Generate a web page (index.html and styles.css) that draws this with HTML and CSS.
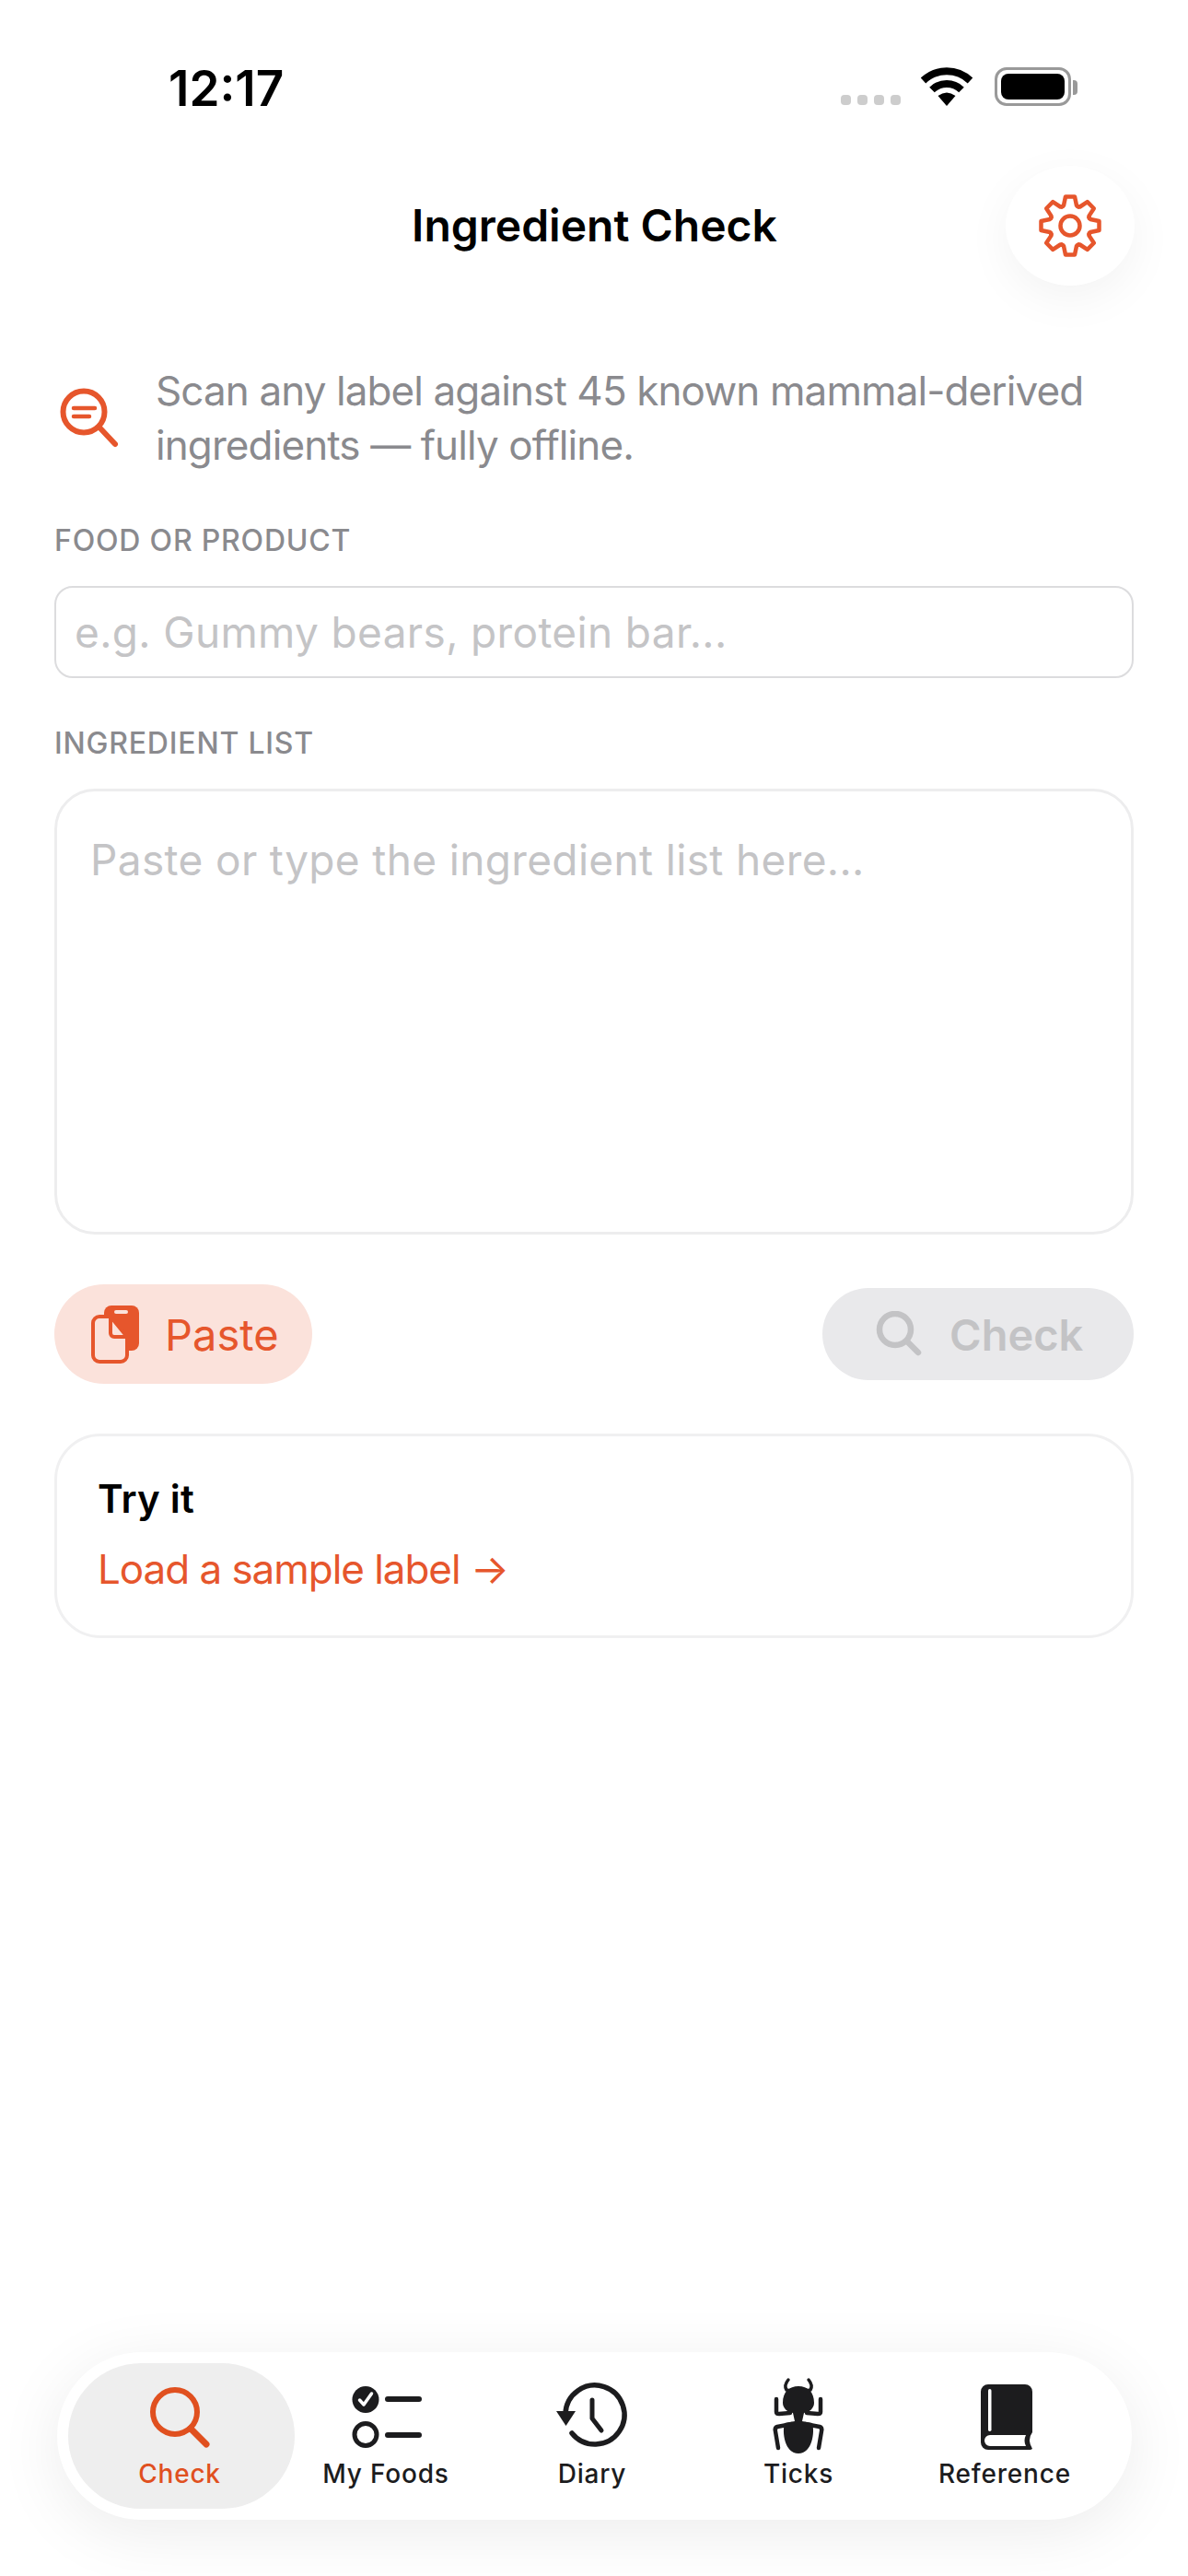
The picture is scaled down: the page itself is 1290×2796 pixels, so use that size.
FILE: index.html
```html
<!DOCTYPE html>
<html lang="en">
<head>
<meta charset="utf-8">
<title>Ingredient Check</title>
<link rel="stylesheet" href="styles.css">
</head>
<body>
<div class="app">
  <div class="status">
    <span class="time">12:17</span>
    <div class="status-icons">
      <div class="dots"><i></i><i></i><i></i><i></i></div>
      <svg class="wifi" width="58" height="42" viewBox="0 0 58 42"><path d="M2.5 14.5A37 37 0 0 1 53.5 14.5M12 24.5A23 23 0 0 1 44 24.5" fill="none" stroke="#000" stroke-width="8"/><path d="M28 42L18.500 31Q28 24 37.500 31Z" fill="#000"/></svg>
      <div class="battery"><div class="battery-fill"></div></div>
    </div>
  </div>

  <header class="header">
    <span></span>
    <h1 class="title">Ingredient Check</h1>
    <button class="gear-btn" aria-label="Settings">
      <svg width="70" height="70" viewBox="-35 -35 70 70" fill="none" stroke="#e6562c" stroke-width="4.500" stroke-linejoin="round" stroke-linecap="round">
        <defs><path id="tooth" d="M-9-20.500L-7-22L-5-31.500H5L7-22L9-20.500"/></defs>
        <use href="#tooth"/><use href="#tooth" transform="rotate(45)"/><use href="#tooth" transform="rotate(90)"/><use href="#tooth" transform="rotate(135)"/>
        <use href="#tooth" transform="rotate(180)"/><use href="#tooth" transform="rotate(225)"/><use href="#tooth" transform="rotate(270)"/><use href="#tooth" transform="rotate(315)"/>
        <circle r="10.500"/>
      </svg>
    </button>
  </header>

  <main class="main">
    <div class="intro">
      <svg class="intro-icon" width="66" height="66" viewBox="0 0 66 66" fill="none" stroke="#e6562c" stroke-linecap="round">
        <circle cx="26" cy="26" r="22.500" stroke-width="6"/>
        <path d="M44 44L60 61" stroke-width="6"/>
        <path d="M15 22H38M15 31H32" stroke-width="4.500"/>
      </svg>
      <p class="intro-text">Scan any label against 45 known mammal-derived ingredients — fully offline.</p>
    </div>

    <label class="field-label label-food">FOOD OR PRODUCT</label>
    <input class="input" type="text" placeholder="e.g. Gummy bears, protein bar...">

    <label class="field-label label-list">INGREDIENT LIST</label>
    <textarea class="textarea" placeholder="Paste or type the ingredient list here..."></textarea>

    <div class="actions">
      <button class="btn-paste">
        <svg width="54" height="66" viewBox="0 0 54 66">
          <rect x="14" y="2" width="38" height="49" rx="8" fill="#e6562c"/>
          <rect x="25" y="7" width="15" height="4" rx="2" fill="#fbe2db"/>
          <path d="M9 14H21L39 36V56A7 7 0 0 1 32 63H9A7 7 0 0 1 2 56V21A7 7 0 0 1 9 14Z" fill="#fbe2db" stroke="#e6562c" stroke-width="4"/>
          <path d="M21 16V32A4 4 0 0 0 25 36H38" fill="none" stroke="#e6562c" stroke-width="4"/>
        </svg>
        <span>Paste</span>
      </button>
      <button class="btn-check">
        <svg width="50" height="50" viewBox="0 0 50 50" fill="none" stroke="#c3c3c5" stroke-width="6.500" stroke-linecap="round">
          <circle cx="21" cy="20" r="17"/><path d="M34 33L46 45"/>
        </svg>
        <span>Check</span>
      </button>
    </div>

    <section class="try">
      <h2 class="try-title">Try it</h2>
      <a class="try-link">Load a sample label →</a>
    </section>
  </main>

  <nav class="tabbar">
    <div class="tab tab-active">
      <svg class="tab-icon" viewBox="0 0 90 84" fill="none" stroke="#e0501f" stroke-width="6" stroke-linecap="round"><circle cx="40" cy="38" r="24"/><path d="M57 56L74 73" stroke-width="7"/></svg>
      <span>Check</span>
    </div>
    <div class="tab">
      <svg class="tab-icon" viewBox="0 0 90 84" fill="none" stroke="#1c1c1e" stroke-linecap="round">
        <circle cx="23" cy="24.500" r="14.500" fill="#1c1c1e" stroke="none"/>
        <path d="M16.500 25L21 30L29.500 18" stroke="#fff" stroke-width="3.500" stroke-linejoin="round"/>
        <circle cx="23" cy="62.500" r="12" stroke-width="5"/>
        <path d="M47 24H81M47 63H81" stroke-width="6"/>
      </svg>
      <span>My Foods</span>
    </div>
    <div class="tab">
      <svg class="tab-icon" viewBox="0 0 90 84" fill="none" stroke="#1c1c1e" stroke-linecap="round" stroke-linejoin="round">
        <path d="M23 61A32 32 0 1 0 16 40" stroke-width="5.500"/>
        <path d="M6 37H27L16.500 53Z" fill="#1c1c1e" stroke="none"/>
        <path d="M45 25V45L55 58" stroke-width="5"/>
      </svg>
      <span>Diary</span>
    </div>
    <div class="tab">
      <svg class="tab-icon" viewBox="0 0 90 84" fill="none" stroke="#1c1c1e" stroke-linecap="round" stroke-linejoin="round">
        <path d="M34 3Q29 9 32 14L36 15M56 3Q61 9 58 14L54 15" stroke-width="3.500"/>
        <path d="M45 10C35 10 28 16 28 28C28 34 33 38 39 39L41 48L30 50C27 60 30 83 45 83C60 83 63 60 60 50L49 48L51 39C57 38 62 34 62 28C62 16 55 10 45 10Z" fill="#1c1c1e" stroke="none"/>
        <path d="M21 24V38Q21 40 24 40L36 39M69 24V38Q69 40 66 40L54 39" stroke-width="4.500"/>
        <path d="M38 51L22 54Q19 55 20 59L23 77M52 51L68 54Q71 55 70 59L67 77" stroke-width="4.500"/>
      </svg>
      <span>Ticks</span>
    </div>
    <div class="tab">
      <svg class="tab-icon" viewBox="0 0 90 84">
        <path d="M27 8H67A8 8 0 0 1 75 16V60Q69 68 75 78L73 79H27A8 8 0 0 1 19 71V16A8 8 0 0 1 27 8Z" fill="#1c1c1e"/>
        <rect x="27" y="13" width="3.500" height="46" rx="1.750" fill="#fff"/>
        <path d="M29 63H68Q65 69 68 75H29A6 6 0 0 1 29 63Z" fill="#fff"/>
      </svg>
      <span>Reference</span>
    </div>
  </nav>
</div>
</body>
</html>
```
FILE: styles.css
```css
* { box-sizing: border-box; }
html, body { margin: 0; padding: 0; background: #fff; }
body { font-family: "Inter", "Liberation Sans", sans-serif; color: #000; }
.app { width: 1290px; height: 2796px; display: flex; flex-direction: column; overflow: hidden; background: #fff; }

.status { height: 180px; padding: 66px 127px 0 183px; display: flex; justify-content: space-between; align-items: flex-start; }
.time { font-size: 53px; font-weight: 600; line-height: 60px; }
.status-icons { display: flex; align-items: flex-start; padding-top: 7px; }
.dots { display: flex; gap: 7px; margin: 30px 22px 0 0; }
.dots i { width: 11px; height: 11px; border-radius: 4px; background: #cdcdcd; display: block; }
.wifi { margin-right: 22px; }
.battery { width: 83px; height: 42px; border: 3px solid #999; border-radius: 13px; padding: 4px; position: relative; }
.battery::after { content: ""; position: absolute; right: -10px; top: 11px; width: 5px; height: 16px; background: #999; border-radius: 0 4px 4px 0; }
.battery-fill { width: 100%; height: 100%; background: #000; border-radius: 8px; }

.header { padding: 0 58px 0 59px; display: grid; grid-template-columns: 1fr auto 1fr; align-items: center; }
.title { margin: 0; font-size: 48px; font-weight: 600; line-height: 60px; }
.gear-btn { justify-self: end; width: 140px; height: 130px; border: 0; border-radius: 50%; background: #fff; padding: 0; display: flex; align-items: center; justify-content: center; box-shadow: 0 14px 50px rgba(0, 0, 0, 0.05); }

.main { flex: 1; padding: 85px 59px 0; }
.intro { display: flex; gap: 38px; padding-left: 6px; }
.intro-icon { flex: none; margin-top: 26px; }
.intro-text { margin: 0; font-size: 44px; line-height: 59px; letter-spacing: -0.9px; color: #8a8a8e; width: 1040px; }
.field-label { display: block; font-size: 32px; font-weight: 500; line-height: 40px; letter-spacing: 0.8px; color: #8a8a8e; }
.label-food { margin-top: 54px; }
.label-list { margin-top: 51px; }
.input { display: block; width: 100%; height: 100px; margin-top: 29px; border: 2px solid #dcdcde; border-radius: 20px; padding: 0 20px; font: 400 46px "Inter", sans-serif; letter-spacing: 0.35px; background: #fff; outline: 0; }
.input::placeholder, .textarea::placeholder { color: #c4c4c6; opacity: 1; }
.textarea { display: block; width: 100%; height: 484px; margin-top: 29px; border: 3px solid #ededee; border-radius: 44px; padding: 46px 36px; font: 400 46px/56px "Inter", sans-serif; letter-spacing: 0.35px; background: #fff; outline: 0; resize: none; }

.actions { display: flex; justify-content: space-between; align-items: center; margin-top: 54px; }
.btn-paste { width: 280px; height: 108px; border: 0; border-radius: 54px; background: #fbe2db; color: #e6562c; display: flex; align-items: center; gap: 26px; padding: 0 0 0 40px; font: 400 47px "Inter", sans-serif; }
.btn-check { width: 338px; height: 100px; border: 0; border-radius: 50px; background: #e9e9eb; color: #c3c3c5; display: flex; align-items: center; gap: 30px; padding: 0 0 0 58px; font: 600 47px "Inter", sans-serif; }

.try { margin-top: 54px; height: 222px; border: 3px solid #f0f0f1; border-radius: 50px; padding: 42px 44px; }
.try-title { margin: 0; font-size: 42px; font-weight: 600; line-height: 52px; letter-spacing: 0.2px; }
.try-link { display: block; margin-top: 24px; font-size: 44px; letter-spacing: -1.05px; line-height: 52px; color: #e6562c; }

.tabbar { margin: 0 61px 61px 62px; height: 182px; border-radius: 91px; background: #fff; padding: 0 0 0 21px; display: flex; box-shadow: 0 14px 70px rgba(0, 0, 0, 0.08); position: relative; }
.tab { width: 224px; position: relative; display: flex; flex-direction: column; align-items: center; padding-top: 27px; font-size: 28px; font-weight: 500; letter-spacing: 0.8px; color: #1c1c1e; }
.tab span { line-height: 34px; margin-top: 4px; position: relative; }
.tab-icon { width: 90px; height: 84px; flex: none; position: relative; }
.tab-active { color: #e0501f; }
.tab-active::before { content: ""; position: absolute; left: -9px; right: -13px; top: 12px; bottom: 12px; background: #eeeeee; border-radius: 80px; }
```
